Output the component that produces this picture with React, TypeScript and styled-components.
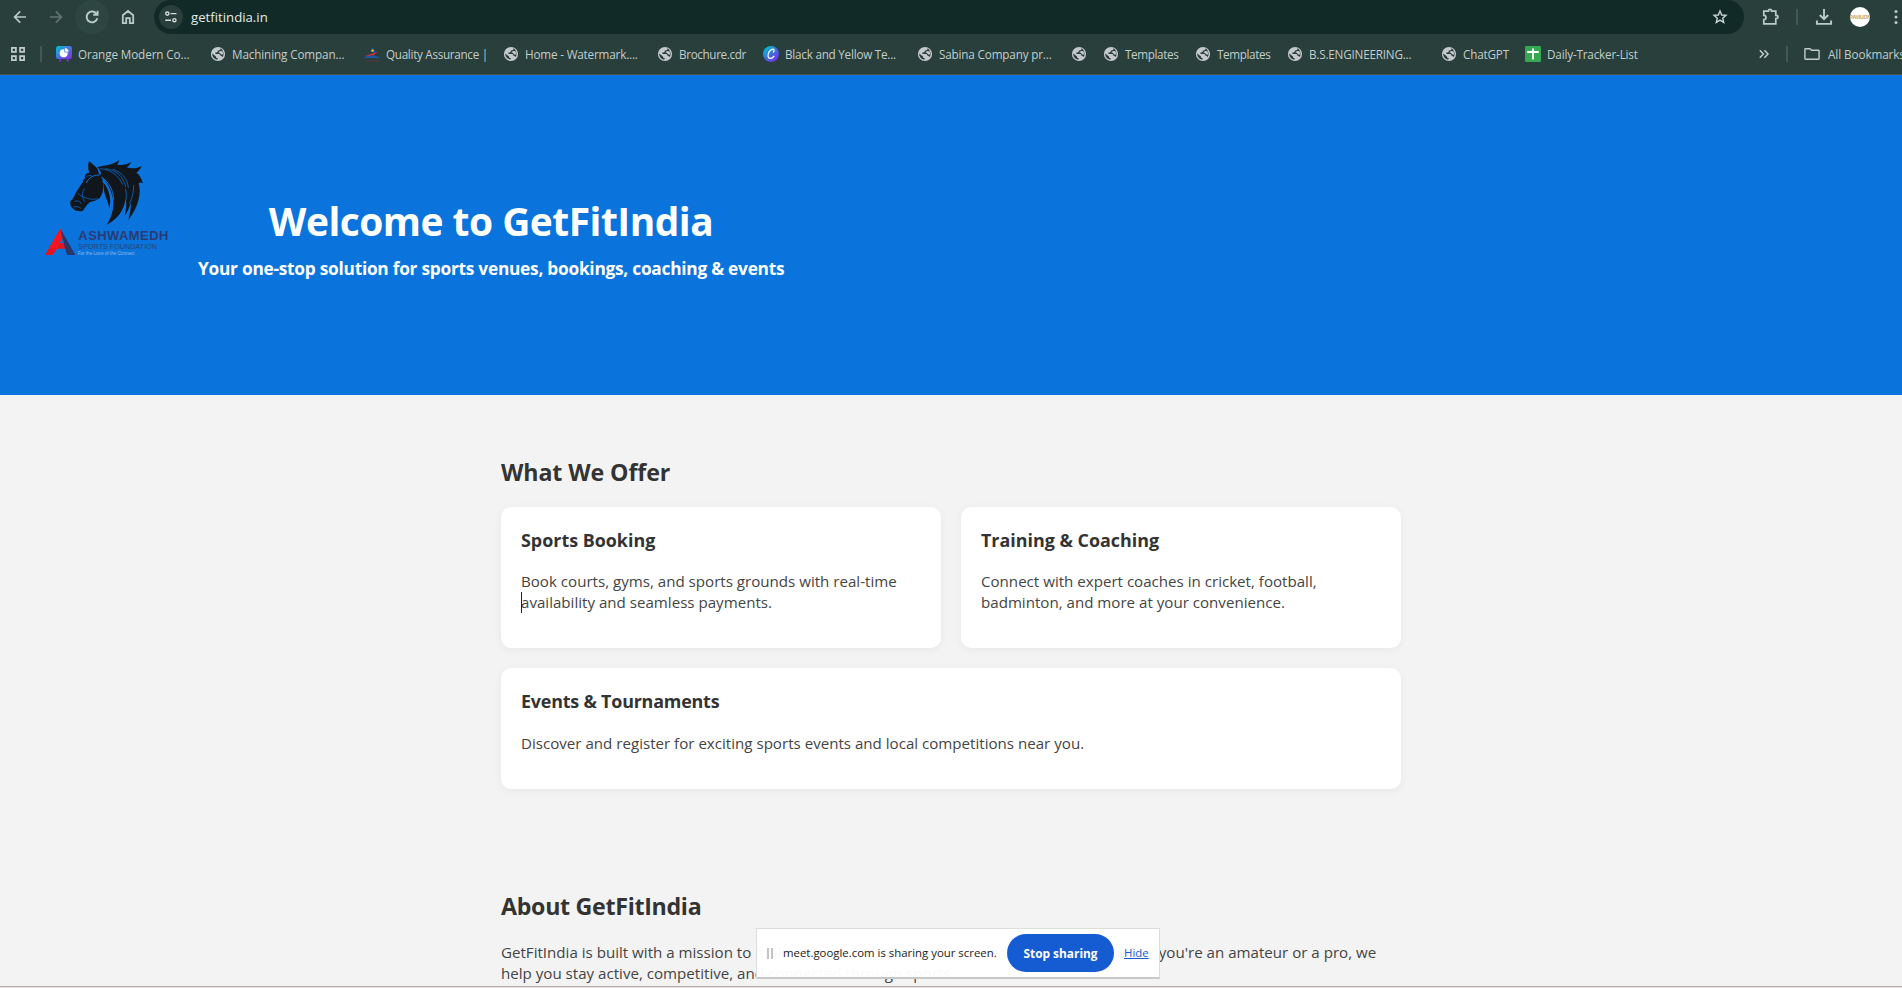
import React from "react";
import styled, { createGlobalStyle } from "styled-components";

const GlobalStyle = createGlobalStyle`
  * { box-sizing: border-box; }
  html, body { margin: 0; padding: 0; overflow: hidden; }
  body { font-family: "Open Sans", "Noto Sans", sans-serif; background: #f3f3f3; }
  h1, h2, h3, p { margin: 0; }
  svg { display: block; flex: none; }
`;

const Window = styled.div`
  width: 1902px;
  height: 988px;
  display: flex;
  flex-direction: column;
  overflow: hidden;
  position: relative;
`;

const Chrome = styled.header`
  height: 75px;
  flex: none;
  background: #283f3b;
  border-bottom: 1px solid #4a5453;
`;

const Toolbar = styled.div`
  height: 34px;
  display: flex;
  align-items: center;
  padding-left: 3px;
`;

const ToolButton = styled.div<{ $active?: boolean }>`
  width: 34px;
  height: 34px;
  margin-right: 2px;
  border-radius: 50%;
  display: flex;
  align-items: center;
  justify-content: center;
  background: ${(p) => (p.$active ? "#2e4641" : "transparent")};
`;

const Omnibox = styled.div`
  width: 1590px;
  height: 34px;
  margin-left: 7px;
  border-radius: 17px;
  background: #112a27;
  display: flex;
  align-items: center;
  padding: 0 16px 0 5px;
`;

const SiteInfo = styled.span`
  width: 24px;
  height: 24px;
  border-radius: 50%;
  background: #283f3b;
  display: flex;
  align-items: center;
  justify-content: center;
`;

const Url = styled.span`
  flex: 1;
  margin-left: 8px;
  font-size: 13.2px;
  line-height: 20px;
  color: #e3eae8;
`;

const Actions = styled.div`
  display: flex;
  align-items: center;
  margin-left: 17px;
`;

const Separator = styled.span<{ $left: number; $right: number }>`
  width: 2px;
  height: 16px;
  flex: none;
  margin: 0 ${(p) => p.$right}px 0 ${(p) => p.$left}px;
  background: #3f5a55;
`;

const Avatar = styled.span`
  width: 20px;
  height: 20px;
  margin: 0 24px 0 16px;
  border-radius: 50%;
  overflow: hidden;
  background: #fff;
  color: #c9a35a;
  font-size: 5px;
  font-weight: 700;
  line-height: 20px;
  text-align: center;
  letter-spacing: -0.4px;
`;

const BookmarksBar = styled.nav`
  height: 40px;
  display: flex;
  align-items: center;
  padding-left: 11px;
`;

const Bookmark = styled.div<{ $width: number; $tracking: number; $gap?: number }>`
  width: ${(p) => p.$width}px;
  flex: none;
  display: flex;
  align-items: center;
  gap: ${(p) => p.$gap ?? 6}px;
  font-size: 11.7px;
  line-height: 20px;
  letter-spacing: ${(p) => p.$tracking}px;
  white-space: nowrap;
  color: #c3cdcb;
`;

const Page = styled.main`
  height: 911px;
  flex: none;
  overflow: hidden;
  background: #f3f3f3;
  color: #333;
`;

const Hero = styled.section`
  height: 320px;
  display: flex;
  align-items: flex-start;
  gap: 25px;
  padding: 80px 40px 0 41px;
  background: #0a74dc;
  color: #fff;
`;

const HeroText = styled.div`
  width: 586px;
  padding-top: 42px;
  text-align: center;
  white-space: nowrap;
`;

const HeroTitle = styled.h1`
  font-size: 38.9px;
  line-height: 48px;
  letter-spacing: -0.5px;
`;

const HeroTagline = styled.p`
  margin-top: 11px;
  font-size: 17.3px;
  font-weight: 700;
  line-height: 26px;
  letter-spacing: -0.25px;
`;

const Section = styled.section<{ $top: number }>`
  width: 900px;
  margin: ${(p) => p.$top}px auto 0;
`;

const SectionTitle = styled.h2<{ $tracking: number }>`
  font-size: 23.2px;
  line-height: 32px;
  letter-spacing: ${(p) => p.$tracking}px;
`;

const CardGrid = styled.div`
  display: grid;
  grid-template-columns: 1fr 1fr;
  grid-template-rows: 141px 121px;
  gap: 20px;
  margin-top: 19px;
`;

const Card = styled.article<{ $wide?: boolean }>`
  grid-column: ${(p) => (p.$wide ? "1 / -1" : "auto")};
  padding: 20px;
  border-radius: 10px;
  background: #fff;
  box-shadow: 0 2px 10px rgba(0, 0, 0, 0.05);
`;

const CardTitle = styled.h3<{ $tracking?: number }>`
  font-size: 17.9px;
  line-height: 26px;
  letter-spacing: ${(p) => p.$tracking ?? 0}px;
`;

const Body = styled.p<{ $top: number }>`
  margin-top: ${(p) => p.$top}px;
  font-size: 15.12px;
  line-height: 21.3px;
  white-space: nowrap;
  color: #444;
`;

const Caret = styled.span`
  position: absolute;
  width: 1px;
  height: 21px;
  background: #222;
`;

const BottomEdge = styled.div`
  height: 2px;
  flex: none;
  background: #eadada;
  border-top: 1px solid #b5adad;
`;

const ShareBar = styled.aside`
  position: absolute;
  left: 756px;
  top: 928px;
  width: 404px;
  height: 51px;
  display: flex;
  align-items: center;
  padding-left: 10px;
  border: 1px solid #dcdcdc;
  border-bottom: 2px solid #c8c8c8;
  background: rgba(255, 255, 255, 0.97);
  font-size: 11.4px;
  line-height: 20px;
  color: #222;
  white-space: nowrap;
`;

const Grip = styled.span`
  width: 6px;
  height: 11px;
  margin-right: 10px;
  border: solid #c4c4c4;
  border-width: 0 2px;
`;

const StopButton = styled.button`
  width: 107px;
  height: 38px;
  margin: 0 10px 0 11px;
  padding: 0;
  border: 0;
  border-radius: 19px;
  background: #155cd2;
  color: #fff;
  font: 700 11.9px/20px "Open Sans", sans-serif;
`;

const HideLink = styled.a`
  color: #155cd2;
  text-decoration: underline;
`;

const ShareMessage = styled.span`
  width: 213px;
`;

const Stroke = ({ d, size = 20, color = "#b9cdc8", w = 1.7 }: { d: string; size?: number; color?: string; w?: number }) => (
  <svg width={size} height={size} viewBox="0 0 20 20" fill="none" stroke={color} strokeWidth={w}>
    <path d={d} />
  </svg>
);

const Globe = () => (
  <svg width="16" height="16" viewBox="0 0 16 16" fill="none">
    <circle cx="8" cy="8" r="7.1" fill="#c5c8cd" />
    <path d="M10.6 2.2C10.7 4.2 9.3 4.4 7.9 4.4C7.9 6 7.2 6.3 5.4 6.5V7.9H9.2C10.2 7.9 10.1 9.6 10.9 9.8C11.8 10 12.1 10.4 12.5 11.2C13.5 9.7 13.8 8.3 13.4 6.7C12.9 4.5 12 3.1 10.6 2.2Z" fill="#283f3b" />
    <path d="M9.9 4.9L12.6 5.2L13.2 8.6L11.2 8.6L9.8 6.7H8.4Z" fill="#c5c8cd" />
    <path d="M2.2 7.4C2 10.7 4.4 13.3 7.6 13.6V12.1C6.3 12.1 6 11.3 6 10.4Z" fill="#283f3b" />
  </svg>
);

const Presentation = () => (
  <svg width="16" height="16" viewBox="0 0 16 16">
    <defs>
      <linearGradient id="pres" x1="0" y1="0" x2="1" y2="1">
        <stop offset="0" stopColor="#00c4cc" />
        <stop offset="0.5" stopColor="#4a72e4" />
        <stop offset="1" stopColor="#8a2be2" />
      </linearGradient>
    </defs>
    <rect width="16" height="13" rx="2.5" fill="url(#pres)" />
    <path d="M5 12L3.7 15.5M11 12L12.3 15.5" stroke="#7a32e0" strokeWidth="1.8" />
    <circle cx="7.7" cy="7.3" r="4" fill="#fff" />
    <path d="M8.6 1.7A4.3 4.3 0 0 1 13 6.1H8.6Z" fill="#fff" stroke="#4a7ae4" strokeWidth=".7" />
  </svg>
);

const Swoosh = () => (
  <svg width="16" height="16" viewBox="0 0 16 16">
    <path d="M8.2 1L12.8 7.2L6.6 6Z" fill="#1c4fa0" />
    <circle cx="8.6" cy="4.6" r="1.2" fill="#f2d21c" />
    <path d="M1 10L14 5.8L10.5 8.6L5 11Z" fill="#e32636" />
    <path d="M0 11.2C5 9.2 10 8.8 15.5 11.2V12H0Z" fill="#1d58a5" />
    <path d="M1 15H15" stroke="#5b3540" strokeWidth="1" />
  </svg>
);

const ScriptC = () => (
  <svg width="16" height="16" viewBox="0 0 16 16">
    <defs>
      <linearGradient id="cdisc" x1="0" y1="0" x2="0.8" y2="1">
        <stop offset="0.1" stopColor="#00c4cc" />
        <stop offset="0.55" stopColor="#3b6fe0" />
        <stop offset="1" stopColor="#7d2ae8" />
      </linearGradient>
    </defs>
    <circle cx="8" cy="8" r="8" fill="url(#cdisc)" />
    <path d="M10.5 6C11.8 4.6 10.9 3 9.3 3.3C6.4 3.9 4.6 8 5.1 10.6C5.6 13.1 9 12.9 10.9 10.3" fill="none" stroke="#fff" strokeWidth="1.3" strokeLinecap="round" />
  </svg>
);

const Sheet = () => (
  <svg width="16" height="16" viewBox="0 0 16 16">
    <rect width="16" height="16" rx="1.2" fill="#34a853" />
    <path d="M2.2 6H13.8M8 2.5V13.5" stroke="#fff" strokeWidth="1.8" />
  </svg>
);

const Folder = () => (
  <svg width="16" height="16" viewBox="0 0 16 16" fill="none" stroke="#c3cdcb" strokeWidth="1.4">
    <path d="M.9 3.4Q.9 2.7 1.6 2.7H6L7.6 4.3H14.4Q15.1 4.3 15.1 5V12.6Q15.1 13.3 14.4 13.3H1.6Q.9 13.3 .9 12.6Z" />
  </svg>
);

const Logo = () => (
  <svg width="132" height="107" viewBox="60 45 396 321">
    <g fill="#11161c">
      <path d="M204 63C212 72 226 78 231 90L233 100C241 105 245 114 245 124C249 143 246 162 237 173C228 182 214 183 206 187C196 196 192 204 186 212C176 216 164 213 157 207C149 201 146 191 148 184C158 176 160 166 168 152C175 143 178 136 186 126C184 122 188 118 193 115C189 108 194 99 205 98C200 86 201 74 204 63Z" />
      <path d="M229 82C250 74 272 78 295 60C293 67 291 71 288 74C304 77 317 73 331 67C326 75 321 79 317 82C333 87 348 86 362 78C358 88 352 94 346 98C356 103 361 116 366 130C360 127 356 127 353 130C362 160 352 202 322 240C327 220 331 203 329 188C324 204 319 218 311 227C315 210 318 192 314 178C308 212 290 238 257 254C273 230 280 202 276 176C270 152 262 128 238 107C242 98 238 91 229 82Z" />
      <path d="M247 127C265 148 272 178 265 205C263 190 255 176 251 161C248 149 248 138 247 127Z" />
    </g>
    <g fill="none" stroke="#0a74dc" strokeLinecap="round">
      <path strokeWidth="2.2" d="M238 86C266 88 292 104 304 132M254 86C286 90 306 108 314 140M276 88C304 98 318 114 322 142M338 136C338 160 332 176 326 190M314 148C318 164 316 176 313 188" />
      <path strokeWidth="3" d="M242 112C264 126 276 148 278 178M196 128C204 112 218 104 235 105" />
      <path strokeWidth="2" d="M170 160C186 174 212 182 230 176M190 146C182 158 182 170 190 184M162 184C170 180 178 184 180 190" />
      <path strokeWidth="2" d="M198 109C205 104 211 106 215 110M158 201C168 198 174 201 180 205" />
    </g>
    <path d="M118 266L72 345H94L109 326H136L128 309H116L123 294L137 318L150 345L162 345Z" fill="#e3141e" />
    <path d="M118 266L163 345H138L129 313Z" fill="#2d3468" />
    <path d="M118 266L84 325L109 326L123 294Z" fill="#f5161f" />
    <text x="172" y="299" fontFamily="Liberation Sans, sans-serif" fontWeight="700" fontSize="39" textLength="270" lengthAdjust="spacing" fill="#2b3b72">ASHWAMEDH</text>
    <text x="172" y="327" fontFamily="Liberation Sans, sans-serif" fontSize="23" textLength="236" lengthAdjust="spacingAndGlyphs" fill="#2c4373">SPORTS FOUNDATION</text>
    <text x="170" y="346" fontFamily="Liberation Sans, sans-serif" fontSize="14.5" textLength="171" lengthAdjust="spacingAndGlyphs" fill="#8fbcf0">For the Love of the Connect</text>
  </svg>
);

const bookmarks = [
  { label: "Orange Modern Co...", icon: <Presentation />, width: 154, tracking: -0.1 },
  { label: "Machining Compan...", icon: <Globe />, width: 154, tracking: -0.12 },
  { label: "Quality Assurance |", icon: <Swoosh />, width: 139, tracking: -0.3 },
  { label: "Home - Watermark....", icon: <Globe />, width: 154, tracking: -0.17 },
  { label: "Brochure.cdr", icon: <Globe />, width: 106, tracking: -0.35 },
  { label: "Black and Yellow Te...", icon: <ScriptC />, width: 154, tracking: -0.23 },
  { label: "Sabina Company pr...", icon: <Globe />, width: 154, tracking: -0.16 },
  { label: "", icon: <Globe />, width: 32, tracking: 0 },
  { label: "Templates", icon: <Globe />, width: 92, tracking: -0.36 },
  { label: "Templates", icon: <Globe />, width: 92, tracking: -0.36 },
  { label: "B.S.ENGINEERING...", icon: <Globe />, width: 154, tracking: -0.2 },
  { label: "ChatGPT", icon: <Globe />, width: 84, tracking: -0.18 },
  { label: "Daily-Tracker-List", icon: <Sheet />, width: 234, tracking: -0.17 },
];

export default function App() {
  return (
    <Window>
      <GlobalStyle />
      <Chrome>
        <Toolbar>
          <ToolButton><Stroke d="M16 10H4.8M10.2 4.4L4.6 10L10.2 15.6" /></ToolButton>
          <ToolButton><Stroke color="#61776f" d="M4 10H15.2M9.8 4.4L15.4 10L9.8 15.6" /></ToolButton>
          <ToolButton $active><Stroke d="M14.6 7A5.4 5.4 0 1 0 15.3 11.2M15.6 3.8V7.8H11.2" w={1.9} /></ToolButton>
          <ToolButton><Stroke d="M4.8 16.2V8.2L10 4L15.2 8.2V16.2H11.8V11.2H8.2V16.2Z" w={1.8} /></ToolButton>
          <Omnibox>
            <SiteInfo>
              <svg width="14" height="14" viewBox="0 0 14 14" fill="none" stroke="#d5dedc" strokeWidth="1.4">
                <circle cx="3.3" cy="3.6" r="1.6" />
                <path d="M6.5 3.6H12.5M1.2 10.2H7" />
                <circle cx="10.4" cy="10.2" r="1.6" />
              </svg>
            </SiteInfo>
            <Url>getfitindia.in</Url>
            <Stroke size={16} w={1.8} color="#c8d2d0" d="M10 2.6L12.1 7.5L17.4 8L13.4 11.5L14.6 16.8L10 14L5.4 16.8L6.6 11.5L2.6 8L7.9 7.5Z" />
          </Omnibox>
          <Actions>
            <Stroke size={20} d="M2.8 4.2H7.4Q7.4 2.4 9 2.4T10.6 4.2H14.8V8.4Q17 8.4 17 10T14.8 11.6V16.8H2.8V12.7Q5 12.6 5 10.5T2.8 8.3Z" />
            <Separator $left={15} $right={16} />
            <Stroke size={20} w={1.9} d="M10 2V12M5.8 8L10 12.2L14.2 8M2.9 13.4V16.9H17.1V13.4" />
            <Avatar>PAVILION</Avatar>
            <svg width="4" height="16" viewBox="0 0 4 16" fill="#b9cdc8">
              <circle cx="2" cy="2.6" r="1.5" /><circle cx="2" cy="8" r="1.5" /><circle cx="2" cy="13.4" r="1.5" />
            </svg>
          </Actions>
        </Toolbar>
        <BookmarksBar>
          <svg width="14" height="14" viewBox="0 0 14 14" fill="none" stroke="#c3cdcb" strokeWidth="1.7">
            <path d="M.9 .9H4.9V4.9H.9ZM9.1 .9H13.1V4.9H9.1ZM.9 9.1H4.9V13.1H.9ZM9.1 9.1H13.1V13.1H9.1Z" />
          </svg>
          <Separator $left={15} $right={14} />
          {bookmarks.map((b, i) => (
            <Bookmark key={i} $width={b.width} $tracking={b.tracking}>
              {b.icon}
              {b.label}
            </Bookmark>
          ))}
          <svg width="10" height="10" viewBox="0 0 10 10" fill="none" stroke="#c3cdcb" strokeWidth="1.5">
            <path d="M.8 1.2L4.4 5L.8 8.8M5.4 1.2L9 5L5.4 8.8" />
          </svg>
          <Separator $left={17} $right={16} />
          <Bookmark $width={110} $tracking={-0.08} $gap={8}>
            <Folder />
            <span>All Bookmarks</span>
          </Bookmark>
        </BookmarksBar>
      </Chrome>

      <Page>
        <Hero>
          <Logo />
          <HeroText>
            <HeroTitle>Welcome to GetFitIndia</HeroTitle>
            <HeroTagline>Your one-stop solution for sports venues, bookings, coaching &amp; events</HeroTagline>
          </HeroText>
        </Hero>
        <Section $top={61}>
          <SectionTitle $tracking={-0.1}>What We Offer</SectionTitle>
          <CardGrid>
            <Card>
              <CardTitle>Sports Booking</CardTitle>
              <Body $top={18}>
                Book courts, gyms, and sports grounds with real-time<br />
                <Caret />availability and seamless payments.
              </Body>
            </Card>
            <Card>
              <CardTitle>Training &amp; Coaching</CardTitle>
              <Body $top={18}>
                Connect with expert coaches in cricket, football,<br />
                badminton, and more at your convenience.
              </Body>
            </Card>
            <Card $wide>
              <CardTitle $tracking={-0.2}>Events &amp; Tournaments</CardTitle>
              <Body $top={19}>Discover and register for exciting sports events and local competitions near you.</Body>
            </Card>
          </CardGrid>
        </Section>
        <Section $top={101}>
          <SectionTitle $tracking={-0.3}>About GetFitIndia</SectionTitle>
          <Body $top={20}>
            GetFitIndia is built with a mission to make fitness and sports accessible to everyone. Whether you're an amateur or a pro, we<br />
            help you stay active, competitive, and connected through sports.
          </Body>
        </Section>
      </Page>
      <BottomEdge />

      <ShareBar>
        <Grip />
        <ShareMessage>meet.google.com is sharing your screen.</ShareMessage>
        <StopButton>Stop sharing</StopButton>
        <HideLink>Hide</HideLink>
      </ShareBar>
    </Window>
  );
}
